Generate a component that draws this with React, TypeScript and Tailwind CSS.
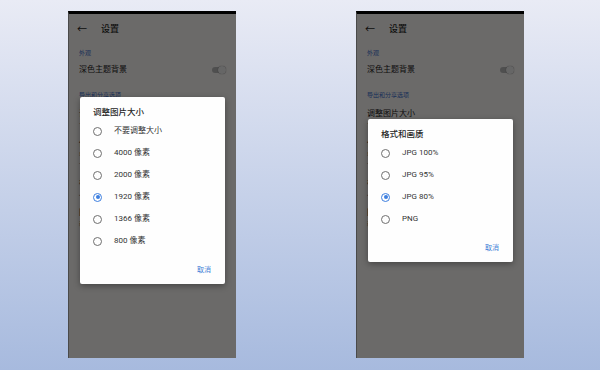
const font = { fontFamily: 'Roboto, "Noto Sans CJK SC", sans-serif' };

type Opt = { label: string; checked?: boolean };

function Radio({ checked }: { checked?: boolean }) {
  return (
    <span
      className={`flex h-[9px] w-[9px] items-center justify-center rounded-full border ${
        checked ? "border-[#3d7fe0]" : "border-[#6f6f6f]"
      }`}
    >
      {checked && <span className="h-[4px] w-[4px] rounded-full bg-[#3d7fe0]" />}
    </span>
  );
}

function Dialog({ title, options }: { title: string; options: Opt[] }) {
  return (
    <div className="w-[145px] rounded-[2px] bg-[#fefefe] pb-[6px] pt-[8px] shadow-[0_2px_6px_rgba(0,0,0,0.35)]">
      <div className="flex h-[15px] items-center pl-[13px] text-[8.5px] font-medium text-[#262626]">
        {title}
      </div>
      <div className="flex flex-col">
        {options.map((o) => (
          <div key={o.label} className="flex h-[22px] items-center pl-[13px]">
            <Radio checked={o.checked} />
            <span className="ml-[12px] text-[8px] text-[#333]">{o.label}</span>
          </div>
        ))}
      </div>
      <div className="mt-[10px] flex h-[16px] items-center justify-end pr-[14px] text-[7px] text-[#3f7fd6]">
        取消
      </div>
    </div>
  );
}

function SettingsScreen() {
  return (
    <div className="flex h-full flex-col bg-[#fffcfa] text-[#1f1f1f]">
      <div className="flex h-[30px] items-center pl-[8px] pt-[2px]">
        <span className="text-[10px] leading-none">←</span>
        <span className="ml-[14px] text-[9px] font-medium">设置</span>
      </div>
      <div className="mt-[4px] pl-[10px] text-[6px] text-[#3b6fd1]">外观</div>
      <div className="mt-[7px] flex items-center justify-between pl-[10px] pr-[12px]">
        <span className="text-[8px]">深色主题背景</span>
        <span className="relative flex h-[6px] w-[12px] items-center rounded-full bg-[#bdbdbd]">
          <span className="absolute right-[-2px] h-[8px] w-[8px] rounded-full bg-[#f4f4f4] shadow-[0_0_1px_rgba(0,0,0,0.6)]" />
        </span>
      </div>
      <div className="mt-[14px] pl-[10px] text-[6px] text-[#3b6fd1]">导出和分享选项</div>
      <div className="mt-[9px] pl-[10px]">
        <div className="text-[8px]">调整图片大小</div>
        <div className="text-[6px] text-[#666]">1920 像素</div>
      </div>
      <div className="mt-[9px] pl-[10px]">
        <div className="text-[8px]">保存到相册</div>
        <div className="text-[6px] text-[#666]">导出图片时同时保存</div>
        <div className="text-[6px] text-[#666]">一份副本</div>
      </div>
      <div className="mt-[9px] pl-[10px]">
        <div className="text-[8px]">格式和画质</div>
        <div className="text-[6px] text-[#666]">JPG 80%</div>
      </div>
      <div className="mt-[9px] pl-[10px]">
        <div className="text-[8px]">图片元数据</div>
        <div className="text-[6px] text-[#666]">移除位置信息</div>
      </div>
    </div>
  );
}

function Phone({ title, options }: { title: string; options: Opt[] }) {
  return (
    <div className="relative h-[347px] w-[168px] overflow-hidden border-l border-[#4a4a4a] border-t-[3px] border-t-black">
      <SettingsScreen />
      <div className="absolute inset-0 bg-black/[0.58]" />
      <div className="absolute inset-0 flex items-center justify-center pt-[9px]">
        <Dialog title={title} options={options} />
      </div>
    </div>
  );
}

export default function App() {
  return (
    <div
      style={font}
      className="flex h-[370px] w-[600px] items-start bg-gradient-to-b from-[#e9ebf5] to-[#a7bade] pt-[11px]"
    >
      <div className="ml-[68px]">
        <Phone
          title="调整图片大小"
          options={[
            { label: "不要调整大小" },
            { label: "4000 像素" },
            { label: "2000 像素" },
            { label: "1920 像素", checked: true },
            { label: "1366 像素" },
            { label: "800 像素" },
          ]}
        />
      </div>
      <div className="ml-[120px]">
        <Phone
          title="格式和画质"
          options={[
            { label: "JPG 100%" },
            { label: "JPG 95%" },
            { label: "JPG 80%", checked: true },
            { label: "PNG" },
          ]}
        />
      </div>
    </div>
  );
}
